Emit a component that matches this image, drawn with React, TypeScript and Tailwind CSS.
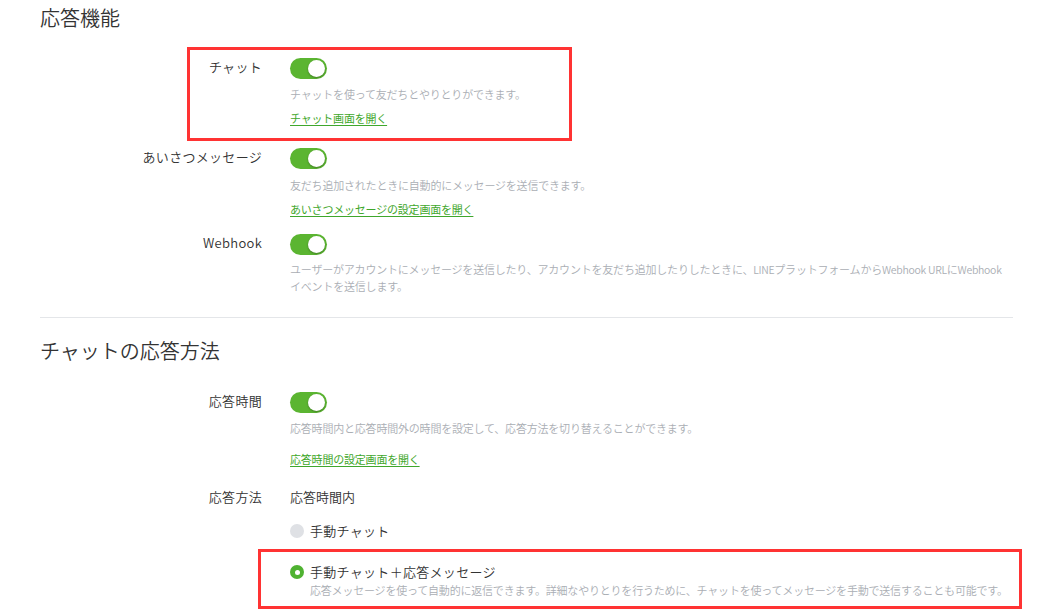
import React from "react";

const FONT = { fontFamily: '"Noto Sans CJK JP", "Noto Sans", sans-serif' };

function Toggle() {
  return (
    <div className="w-[37px] h-[21px] rounded-full bg-[#5bb531] flex items-center justify-end pr-[2px]">
      <div className="w-[17px] h-[17px] rounded-full bg-white shadow-[0_1px_2px_rgba(0,0,0,0.3)]" />
    </div>
  );
}

function Label({ children }: { children: React.ReactNode }) {
  return (
    <div className="w-[222px] shrink-0 text-right text-[13px] leading-[18px] text-[#333] font-[350] tracking-[0.3px]">
      {children}
    </div>
  );
}

function Desc({ children, className = "" }: { children: React.ReactNode; className?: string }) {
  return (
    <div className={"text-[11px] leading-[16px] text-[#aaaeb4] font-[350] tracking-[-0.2px] whitespace-nowrap " + className}>
      {children}
    </div>
  );
}

function Link({ children, className = "" }: { children: React.ReactNode; className?: string }) {
  return (
    <div className={"text-[11px] leading-[16px] " + className}>
      <span className="text-[#3fa72c] underline underline-offset-[2px] decoration-[#3fa72c] tracking-[-0.2px]">
        {children}
      </span>
    </div>
  );
}

function Latin({ children }: { children: React.ReactNode }) {
  return <span className="text-[10.5px] tracking-[-0.3px]">{children}</span>;
}

export default function App() {
  return (
    <div className="relative w-[1055px] h-[610px] bg-white overflow-hidden" style={FONT}>
      <div className="px-[40px] pt-[4px]">
        <h2 className="text-[20px] leading-[28px] text-[#333] font-[350]">応答機能</h2>

        {/* チャット */}
        <div className="flex mt-[26px]">
          <Label>チャット</Label>
          <div className="ml-[28px] flex flex-col">
            <Toggle />
            <Desc className="mt-[7px]">チャットを使って友だちとやりとりができます。</Desc>
            <Link className="mt-[8px]">チャット画面を開く</Link>
          </div>
        </div>

        {/* あいさつメッセージ */}
        <div className="flex mt-[22px]">
          <Label>あいさつメッセージ</Label>
          <div className="ml-[28px] flex flex-col">
            <Toggle />
            <Desc className="mt-[8px]">友だち追加されたときに自動的にメッセージを送信できます。</Desc>
            <Link className="mt-[8px]">あいさつメッセージの設定画面を開く</Link>
          </div>
        </div>

        {/* Webhook */}
        <div className="flex mt-[17px]">
          <Label>Webhook</Label>
          <div className="ml-[28px] flex flex-col">
            <Toggle />
            <Desc className="mt-[6px]">
              ユーザーがアカウントにメッセージを送信したり、アカウントを友だち追加したりしたときに、
              <Latin>LINE</Latin>プラットフォームから<Latin>Webhook URL</Latin>に<Latin>Webhook</Latin>
              <br />
              イベントを送信します。
            </Desc>
          </div>
        </div>

        <div className="mt-[23px] h-px w-[973px] bg-[#e4e6e9]" />

        <h2 className="mt-[19px] text-[20px] leading-[28px] text-[#333] font-[350]">チャットの応答方法</h2>

        {/* 応答時間 */}
        <div className="flex mt-[27px]">
          <Label>応答時間</Label>
          <div className="ml-[28px] flex flex-col">
            <Toggle />
            <Desc className="mt-[7px]">
              応答時間内と応答時間外の時間を設定して、応答方法を切り替えることができます。
            </Desc>
            <Link className="mt-[15px]">応答時間の設定画面を開く</Link>
          </div>
        </div>

        {/* 応答方法 */}
        <div className="flex mt-[20px]">
          <div className="w-[222px] shrink-0 text-right text-[13px] leading-[20px] text-[#333] font-[350] tracking-[0.3px]">
            応答方法
          </div>
          <div className="ml-[28px] flex flex-col">
            <div className="text-[13px] leading-[20px] text-[#333] font-[350]">応答時間内</div>
            <div className="mt-[14px] flex items-center">
              <div className="w-[14px] h-[14px] rounded-full bg-[#dfe1e5]" />
              <span className="ml-[6px] text-[13px] leading-[20px] text-[#333] font-[350] tracking-[0.3px]">手動チャット</span>
            </div>
            <div className="mt-[21px] flex items-center">
              <div className="w-[14px] h-[14px] rounded-full bg-[#4fb231] flex items-center justify-center">
                <div className="w-[5px] h-[5px] rounded-full bg-white" />
              </div>
              <span className="ml-[6px] text-[13px] leading-[20px] text-[#333] font-[350] tracking-[0.3px]">
                手動チャット＋応答メッセージ
              </span>
            </div>
            <Desc className="ml-[20px]">
              応答メッセージを使って自動的に返信できます。詳細なやりとりを行うために、チャットを使ってメッセージを手動で送信することも可能です。
            </Desc>
          </div>
        </div>
      </div>

      {/* annotation boxes */}
      <div className="absolute left-[187px] top-[47px] w-[385px] h-[94px] border-[3px] border-[#ff3333] pointer-events-none" />
      <div className="absolute left-[258px] top-[549px] w-[764px] h-[60px] border-[3px] border-[#ff3333] pointer-events-none" />
    </div>
  );
}
